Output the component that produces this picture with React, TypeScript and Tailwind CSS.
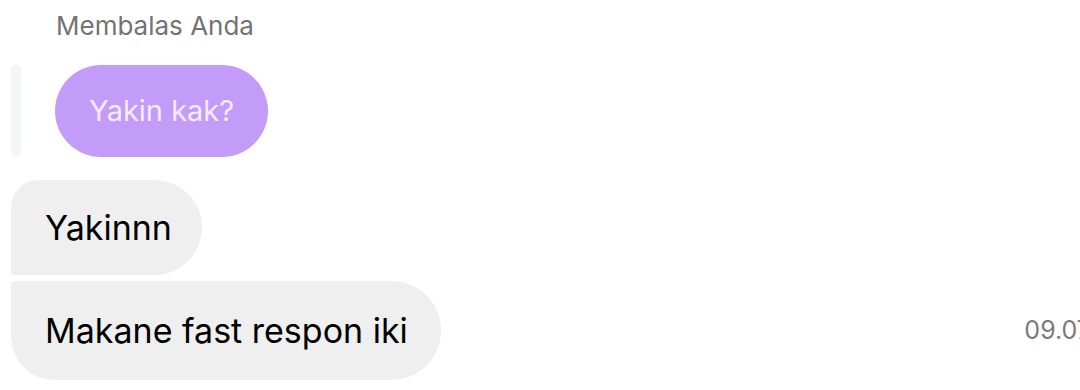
import React from "react";

export default function App() {
  return (
    <div
      className="w-[1080px] h-[390px] bg-white overflow-hidden relative"
      style={{ fontFamily: "Inter, 'Noto Sans', sans-serif" }}
    >
      <div className="pl-[56px] pt-[11px] text-[26px] leading-[30px] text-[#737373]">
        Membalas Anda
      </div>
      <div className="flex mt-[24px] pl-[11px] gap-[34px]">
        <div className="w-[10px] h-[92px] rounded-full bg-[#f4f5f8]" />
        <div className="h-[92px] px-[34px] flex items-center rounded-full bg-[#c39bf9] text-[#f5ebfd] text-[29px]">
          Yakin kak?
        </div>
      </div>
      <div className="flex flex-col items-start pl-[11px] mt-[23px] gap-[6px]">
        <div className="h-[95px] pl-[34px] pr-[30px] flex items-center bg-[#efefef] text-black text-[34px] rounded-tl-[28px] rounded-bl-[4px] rounded-r-[48px]">
          Yakinnn
        </div>
        <div className="w-full flex items-center justify-between">
          <div className="h-[99px] pl-[34px] pr-[33px] flex items-center bg-[#efefef] text-black text-[34px] rounded-tl-[4px] rounded-bl-[44px] rounded-r-[50px]">
            Makane fast respon iki
          </div>
          <div className="text-[25px] text-[#7a7a7a] mr-[-11px] whitespace-nowrap">09.07</div>
        </div>
      </div>
    </div>
  );
}
